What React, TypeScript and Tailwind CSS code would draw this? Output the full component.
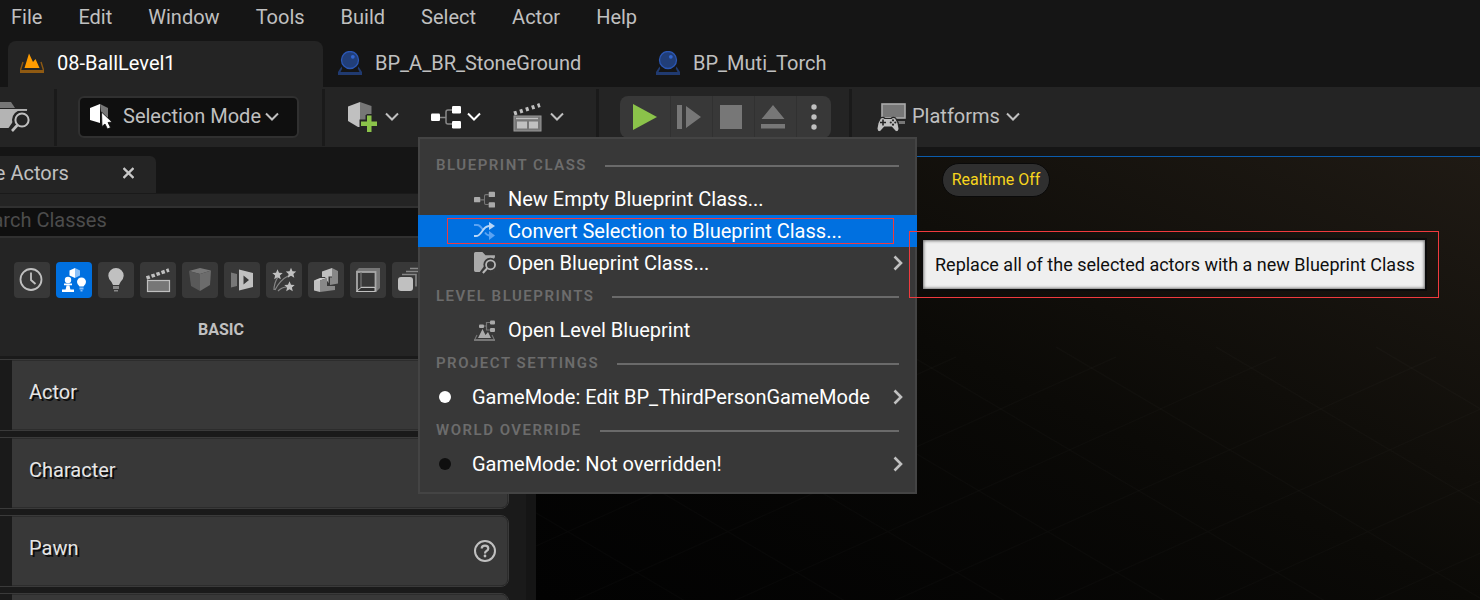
import type { ReactNode } from "react";

const menus = ["File", "Edit", "Window", "Tools", "Build", "Select", "Actor", "Help"];

function Chevron({ className = "text-[#c0c0c0]" }: { className?: string }) {
  return (
    <svg width="14" height="10" viewBox="0 0 14 10" className={className} fill="none" stroke="currentColor" strokeWidth="2">
      <path d="M1 1.5 L7 7.5 L13 1.5" />
    </svg>
  );
}

function SubmenuArrow() {
  return (
    <svg width="10" height="16" viewBox="0 0 10 16" fill="none" stroke="#c0c0c0" strokeWidth="2.6">
      <path d="M1.5 1.5 L8 8 L1.5 14.5" />
    </svg>
  );
}

function LevelIcon() {
  return (
    <svg width="24" height="20" viewBox="0 0 24 20">
      <path d="M0 17h24v3H0z" fill="#8f5a12" />
      <path d="M3 9 L0.5 17 M21 9 L23.5 17" stroke="#8f5a12" strokeWidth="1.4" />
      <path d="M4.5 15 L9 0.5 L13 9 L15.5 6 L19.5 15z" fill="#ff9c00" />
    </svg>
  );
}

function OrbIcon() {
  return (
    <svg width="24" height="24" viewBox="0 0 24 24">
      <path d="M3.500 15.500 L0 21v3h24v-3L20.500 15.500 L19.800 17.500 L21.500 21h-19l1.700-3.500z" fill="#203a70" />
      <circle cx="12" cy="9" r="8.500" fill="#213e78" stroke="#2b57b4" strokeWidth="1.300" />
      <circle cx="14.800" cy="5.800" r="1.900" fill="#3266cf" />
    </svg>
  );
}

function FolderSearch({ size, bg }: { size: number; bg: string }) {
  return (
    <svg width={size} height={size} viewBox="0 0 21 21" className="shrink-0">
      <path d="M0 1.500 Q0 0 1.500 0 H8 L11 3 H20 V17.500 Q20 19 18.500 19 H1.500 Q0 19 0 17.500z" fill="#aaaaaa" />
      <path d="M20 5 V19 H9 Z" fill={bg} />
      <circle cx="15.500" cy="12" r="6.500" fill={bg} />
      <path d="M12.500 14 L7.500 20.500" stroke={bg} strokeWidth="5" />
      <circle cx="15.800" cy="12.200" r="4.300" fill="none" stroke="#b8b8b8" strokeWidth="1.700" />
      <path d="M12.700 15.400 L8.500 20" stroke="#b8b8b8" strokeWidth="2" />
    </svg>
  );
}

function BrowseIcon() {
  return (
    <svg width="42" height="32" viewBox="0 0 42 32" className="shrink-0">
      <path d="M12 1 H23 L27 7 H12z" fill="#777" />
      <path d="M0 8 H39 Q40 8 40 10 L24 27 H2 Q0 27 0 25z" fill="#b4b4b4" />
      <circle cx="34" cy="19" r="10" fill="#242424" />
      <path d="M34 10 L40 8 V14z" fill="#242424" />
      <path d="M29 21 L22 31" stroke="#242424" strokeWidth="7" />
      <path d="M26 9 H39" stroke="#b4b4b4" strokeWidth="1.800" />
      <circle cx="34" cy="19" r="6.600" fill="none" stroke="#c0c0c0" strokeWidth="2" />
      <path d="M29.500 24 L24 30" stroke="#c0c0c0" strokeWidth="2.600" />
    </svg>
  );
}

function SelectIcon() {
  return (
    <svg width="23" height="26" viewBox="0 0 23 26">
      <path d="M0 4 L10 0 V19 L0 16z" fill="#fff" />
      <path d="M10 0 L18 4 V14 L11 8z" fill="#777" />
      <path d="M11.500 8 L12 22.500 L15 20 L17.500 25 L20.500 23.500 L18 18.500 L22 18z" fill="#fff" stroke="#0f0f0f" strokeWidth="0.800" />
    </svg>
  );
}

function AddCubeIcon() {
  return (
    <svg width="30" height="30" viewBox="0 0 30 30">
      <path d="M1 4.500 L13 0 V25 L11 25 L1 19z" fill="#c0c0c0" />
      <path d="M13 0 L24.500 4 V13 H18.500 V18 H13z" fill="#777" />
      <path d="M19.500 12 H26 V18.500 H30 V25.500 H12.500 V17.500 H19.500z" fill="#242424" />
      <path d="M20 13.500 H24.500 V19.500 H30 V24 H24.500 V30 H20 V24 H14 V19.500 H20z" fill="#8bc34a" />
    </svg>
  );
}

function GraphIcon({ width, color, wire }: { width: number; color: string; wire: string }) {
  return (
    <svg width={width} height={Math.round(width * 0.8)} viewBox="0 0 30 24">
      <path d="M9 12.500 H15 M21 5 H17 Q15 5 15 7 V17 Q15 19 17 19 H21" fill="none" stroke={wire} strokeWidth="1.500" />
      <rect x="0" y="8.500" width="9" height="7.500" rx="1.200" fill={color} />
      <rect x="21" y="1" width="9" height="7.500" rx="1.200" fill={color} />
      <rect x="21" y="16" width="9" height="7.500" rx="1.200" fill={color} />
    </svg>
  );
}

function CinematicsIcon() {
  return (
    <svg width="29" height="30" viewBox="0 0 29 30">
      <path d="M1 11.500 L27 3" stroke="#c0c0c0" strokeWidth="4" strokeDasharray="3 3.200" />
      <rect x="1" y="14" width="27" height="15" fill="#777" stroke="#999" />
      <path d="M3 16.500h22" stroke="#c0c0c0" strokeWidth="1.400" />
      <path d="M4 19.500h10v7H4zM16 19.500h9v7h-9z" fill="#c0c0c0" />
    </svg>
  );
}

function PlatformsIcon() {
  return (
    <svg width="30" height="29" viewBox="0 0 30 29">
      <rect x="6" y="1" width="23" height="14" fill="#777" stroke="#aaa" strokeWidth="1.600" />
      <path d="M22 18 h7 v3 h-6z" fill="#777" />
      <path d="M4.500 15 Q7 13.500 9 15.500 H15 Q17 13.500 19.500 15 Q23.500 21 23 26.500 Q22 30 19 28 L15.500 24 H8.500 L5 28 Q2 30 1 26.500 Q0.500 21 4.500 15z" fill="#c0c0c0" stroke="#242424" strokeWidth="1.200" />
      <path d="M7 16.500v6M4 19.500h6" stroke="#242424" strokeWidth="1.600" />
      <circle cx="17" cy="17.300" r="1.100" fill="#242424" />
      <circle cx="17" cy="21.700" r="1.100" fill="#242424" />
      <circle cx="19.300" cy="19.500" r="1.100" fill="#242424" />
      <circle cx="14.800" cy="19.500" r="1.100" fill="#242424" />
    </svg>
  );
}

function ShuffleIcon() {
  return (
    <svg width="21" height="18" viewBox="0 0 21 18" fill="none" strokeWidth="1.800">
      <path d="M0 3 H3 Q6 3 9 8 M11 10.500 Q12.500 13 15 13.500" stroke="#5ba3f2" />
      <path d="M15 9 L21 13.500 L15 18z" fill="#5ba3f2" />
      <path d="M0 14 H2 C8 14 8 4.500 15 4" stroke="#b9d7f8" />
      <path d="M15 0 L21 4 L15 8z" fill="#b9d7f8" />
    </svg>
  );
}

function LevelGraphIcon() {
  return (
    <svg width="21" height="21" viewBox="0 0 21 21">
      <path d="M9 6 H12.500 M16 2.500 H12.500 V10 H16" fill="none" stroke="#777" strokeWidth="1.200" />
      <rect x="5" y="4.500" width="5" height="3.500" rx="1" fill="#aaa" />
      <rect x="16" y="0.500" width="5" height="4" rx="1" fill="#aaa" />
      <rect x="16" y="8" width="5" height="4" rx="1" fill="#aaa" />
      <path d="M4 18 L8.500 9 L11.500 15 L14 12 L17 18z" fill="#aaa" />
      <path d="M0 19h21v2H0z" fill="#777" />
      <path d="M3 15 L1 19 M18 15 L20 19" stroke="#777" strokeWidth="1.100" />
    </svg>
  );
}

const star = "M0 -5.200 L1.500 -1.700 L5.200 -1.500 L2.400 1 L3.300 4.700 L0 2.700 L-3.300 4.700 L-2.400 1 L-5.200 -1.500 L-1.500 -1.700z";

const categories: { name: string; icon: ReactNode }[] = [
  {
    name: "Recently Placed",
    icon: (
      <>
        <circle cx="17" cy="17.500" r="10.500" fill="none" stroke="#c0c0c0" strokeWidth="1.800" />
        <path d="M17 10.500 V18 L21.500 22" fill="none" stroke="#c0c0c0" strokeWidth="1.800" />
      </>
    ),
  },
  {
    name: "Basic",
    icon: (
      <>
        <path d="M13.500 8.500 L19 6 V16 L13.500 13.500z" fill="#fff" />
        <path d="M19 6 L24 8.500 V13.500 L19 16z" fill="#8cc0f7" />
        <circle cx="12" cy="18" r="3.200" fill="#fff" />
        <path d="M8 21.500h8v1.800H8z M10.500 23.500h3l1 4.500h-5z M6 27.500h12v2.500H6z" fill="#fff" />
        <path d="M25.500 15.500 a4.500 4.500 0 0 1 4.500 4.500 q0 2-2.500 4.500h-4 q-2.500-2.500-2.500-4.500 a4.500 4.500 0 0 1 4.500-4.500z" fill="#fff" />
        <path d="M23.500 25.500h4v2h-4z M24.500 28h2v1.500h-2z" fill="#8cc0f7" />
      </>
    ),
  },
  {
    name: "Lights",
    icon: (
      <>
        <path d="M18 6 a7.700 7.700 0 0 1 7.700 7.700 q0 3-3.200 6.300 l-1.500 3h-6 l-1.500-3 q-3.200-3.300-3.200-6.300 A7.700 7.700 0 0 1 18 6z" fill="#c0c0c0" />
        <path d="M15 24h6v3h-6z M16 28h4v1.500h-4z" fill="#888" />
      </>
    ),
  },
  {
    name: "Cinematic",
    icon: (
      <>
        <path d="M6.500 16 L29 8" stroke="#c0c0c0" strokeWidth="3.500" strokeDasharray="3.500 1.800" />
        <rect x="7.500" y="18.500" width="22" height="11" fill="#777" stroke="#c0c0c0" strokeWidth="1.200" />
      </>
    ),
  },
  {
    name: "Visual Effects",
    icon: (
      <>
        <path d="M7 9 L18 6 L29 8.500 L18 12z" fill="#777" />
        <path d="M7 9 L18 12 V29 L9 24z" fill="#595959" />
        <path d="M18 12 L29 8.500 L28 23 L18 29z" fill="#6c6c6c" />
      </>
    ),
  },
  {
    name: "Geometry",
    icon: (
      <>
        <path d="M7 10.500 L13 12 V24 L7 25.500z" fill="#777" />
        <path d="M15 7.500 L29 11 V25 L15 28.500z M19.500 13.500 V22.500 L25 18z" fill="#c0c0c0" fillRule="evenodd" />
      </>
    ),
  },
  {
    name: "Particles",
    icon: (
      <>
        <path d="M8 28 Q8 21 12 15 M9 28 Q14 18 22 14 M12 29 Q16 25 21 25" stroke="#888" strokeWidth="1.200" fill="none" />
        <path d={star} fill="#c0c0c0" transform="translate(11.500 12.500)" />
        <path d={star} fill="#c0c0c0" transform="translate(25 11)" />
        <path d={star} fill="#c0c0c0" transform="translate(23.500 24.500)" />
      </>
    ),
  },
  {
    name: "Volumes",
    icon: (
      <>
        <path d="M14 9.500 L24 6 V14.500 H20.500 V21 L17 15 H14z" fill="#c0c0c0" />
        <path d="M24 6 L30 9 V21.500 L22 23 V15.500 H24z" fill="#888" />
        <path d="M6 18.500 L12 17 V30 L6 28.500z" fill="#c0c0c0" />
        <path d="M6 18.500 L12 16 H19 L12 18.500z" fill="#d0d0d0" />
        <path d="M12 18.500 L19 16 V24 H27 V28 L12 30z" fill="#888" />
      </>
    ),
  },
  {
    name: "Brushes",
    icon: (
      <>
        <path d="M6 9 L9 6 H30 V26 L26 30 V10 H6z" fill="#777" />
        <rect x="7" y="10" width="18.500" height="19" fill="none" stroke="#a8a8a8" strokeWidth="1.800" />
        <path d="M11 10 V25 H25" stroke="#777" strokeWidth="1.200" fill="none" />
        <path d="M6.500 29.500 L11 25.500 H25 V29.500z" fill="#303030" stroke="#c0c0c0" />
      </>
    ),
  },
  {
    name: "All Classes",
    icon: (
      <>
        <path d="M18 6.500h12v12 M14 9.500h13v12 M10 12.500h14v12" stroke="#888" strokeWidth="1.600" fill="none" />
        <rect x="6" y="15" width="15" height="14" rx="3" fill="#c0c0c0" />
      </>
    ),
  },
];

const actors = ["Actor", "Character", "Pawn"];

function Divider() {
  return <div className="h-[57px] w-[3px] shrink-0 bg-[#1a1a1a]" />;
}

function SectionTitle({ children }: { children: string }) {
  return (
    <div className="flex h-[35px] items-center gap-[18px] px-4">
      <h3 className="whitespace-nowrap text-[15px] font-semibold tracking-[1.500px] text-[#6c6c6c]">{children}</h3>
      <div className="h-0.5 flex-1 bg-[#6a6a6a]" />
    </div>
  );
}

function MenuItem({ icon, label, arrow }: { icon: ReactNode; label: string; arrow?: boolean }) {
  return (
    <button className="flex h-8 w-full items-center pl-[54px] pr-3 text-left">
      <span className="flex w-[34px] shrink-0 items-center">{icon}</span>
      <span className="flex-1 whitespace-nowrap">{label}</span>
      {arrow && <SubmenuArrow />}
    </button>
  );
}

function ModeItem({ label, dot }: { label: string; dot: ReactNode }) {
  return (
    <button className="flex h-8 w-full items-center pl-[19px] pr-3 text-left">
      <span className="w-[33px] shrink-0">{dot}</span>
      <span className="flex-1 whitespace-nowrap">{label}</span>
      <SubmenuArrow />
    </button>
  );
}

function BlueprintMenu() {
  return (
    <div className="absolute -left-[13px] top-[50px] z-10 w-[499px] border-2 border-[#444444] bg-[#383838] pb-3 pt-[9px] text-xl text-white">
      <SectionTitle>BLUEPRINT CLASS</SectionTitle>
      <MenuItem icon={<GraphIcon width={21} color="#aaaaaa" wire="#777777" />} label="New Empty Blueprint Class..." />
      <div className="relative -mx-0.5 bg-[#0070e0] px-0.5">
        <MenuItem icon={<ShuffleIcon />} label="Convert Selection to Blueprint Class..." />
        <div className="pointer-events-none absolute inset-y-[3px] left-[29px] right-[23px] border border-[#f03a3e]" />
        <div className="absolute left-[491px] top-4 border border-[#f03a3e] px-[11px] py-1.5">
          <div
            role="tooltip"
            className="flex h-[53px] items-center whitespace-nowrap border-2 border-[#0c0c0c] bg-[#efefef] pl-3 pr-2.5 text-lg text-[#0f0f0f] shadow-[inset_0_0_3px_1px_#777]"
          >
            Replace all of the selected actors with a new Blueprint Class
          </div>
        </div>
      </div>
      <MenuItem icon={<FolderSearch size={22} bg="#383838" />} label="Open Blueprint Class..." arrow />
      <SectionTitle>LEVEL BLUEPRINTS</SectionTitle>
      <MenuItem icon={<LevelGraphIcon />} label="Open Level Blueprint" />
      <SectionTitle>PROJECT SETTINGS</SectionTitle>
      <ModeItem label="GameMode: Edit BP_ThirdPersonGameMode" dot={<span className="block size-3 rounded-full bg-white" />} />
      <SectionTitle>WORLD OVERRIDE</SectionTitle>
      <ModeItem label="GameMode: Not overridden!" dot={<span className="block size-3 rounded-full bg-[#0f0f0f]" />} />
    </div>
  );
}

function Toolbar() {
  return (
    <div className="flex h-[60px] shrink-0 items-center bg-[#242424] text-xl text-[#c0c0c0]">
      <button aria-label="Browse" className="-ml-3 mr-6 flex">
        <BrowseIcon />
      </button>
      <Divider />
      <button className="ml-[21px] mr-[23px] flex h-[42px] w-[221px] shrink-0 items-center rounded-md border-2 border-[#303030] bg-[#0f0f0f] pl-2.5">
        <SelectIcon />
        <span className="ml-2.5 mr-1 whitespace-nowrap pb-0.5">Selection Mode</span>
        <Chevron />
      </button>
      <Divider />
      <button aria-label="Add" className="ml-[22px] flex items-center gap-2">
        <AddCubeIcon />
        <Chevron />
      </button>
      <div className="relative ml-8 flex h-full">
        <button aria-label="Blueprints" className="flex items-center gap-1.5">
          <GraphIcon width={30} color="#ffffff" wire="#888888" />
          <Chevron className="text-white" />
        </button>
        <BlueprintMenu />
      </div>
      <button aria-label="Cinematics" className="ml-8 mr-8 flex items-center gap-2">
        <CinematicsIcon />
        <Chevron />
      </button>
      <Divider />
      <div className="ml-[21px] mr-[18px] flex h-[42px] shrink-0 divide-x divide-[#313131] overflow-hidden rounded-lg bg-[#383838]">
        <button aria-label="Play" className="flex w-[51px] items-center justify-center">
          <svg width="24" height="26" viewBox="0 0 24 26">
            <path d="M0 0 L24 13 L0 26z" fill="#8bc34a" />
          </svg>
        </button>
        <button aria-label="Skip" className="flex w-[42px] items-center justify-center pr-1.5">
          <svg width="24" height="24" viewBox="0 0 24 24" fill="#777">
            <path d="M0 0h5v24H0zM9 1 L24 12 L9 23z" />
          </svg>
        </button>
        <button aria-label="Stop" className="flex w-[42px] items-center justify-center pr-1.5">
          <span className="block h-6 w-[22px] bg-[#777777]" />
        </button>
        <button aria-label="Eject" className="flex w-[42px] items-center justify-center pr-1.5">
          <svg width="24" height="24" viewBox="0 0 24 24" fill="#777">
            <path d="M12 0 L23.500 14 H0.500z M0 19h24v4.500H0z" />
          </svg>
        </button>
        <button aria-label="Play options" className="flex w-[34px] items-center justify-center">
          <svg width="6" height="28" viewBox="0 0 6 28" fill="#c0c0c0">
            <circle cx="3" cy="4" r="2.700" />
            <circle cx="3" cy="14" r="2.700" />
            <circle cx="3" cy="24" r="2.700" />
          </svg>
        </button>
      </div>
      <Divider />
      <button className="ml-6 flex items-center">
        <PlatformsIcon />
        <span className="ml-1.5 mr-1.5 pb-0.5">Platforms</span>
        <Chevron />
      </button>
    </div>
  );
}

function PlaceActors() {
  return (
    <aside className="-ml-[84px] flex w-[610px] shrink-0 flex-col bg-[#1a1a1a] text-xl text-[#c0c0c0]">
      <div className="bg-[#151515] pt-[9px]">
        <div className="flex h-[37px] w-60 items-center justify-between rounded-t-md bg-[#242424] pb-[3px] pl-10 pr-[22px]">
          <span className="whitespace-nowrap">Place Actors</span>
          <button aria-label="Close" className="flex">
            <svg width="11" height="12" viewBox="0 0 11 12" stroke="#c8c8c8" strokeWidth="2.400">
              <path d="M0.500 1 L10.500 11 M10.500 1 L0.500 11" />
            </svg>
          </button>
        </div>
      </div>
      <div className="border-t border-[#1a1a1a] bg-[#242424] pt-3">
        <input
          type="search"
          aria-label="Search Classes"
          placeholder="Search Classes"
          className="block h-8 w-full border-y-2 border-[#303030] bg-[#0f0f0f] pb-1 pl-[54px] placeholder:text-[#4c4c4c]"
        />
        <div className="mt-6 flex justify-center gap-1.5">
          {categories.map((c) => (
            <button key={c.name} aria-label={c.name} className={`size-9 rounded ${c.name === "Basic" ? "bg-[#0070e0]" : "bg-[#383838]"}`}>
              <svg width="36" height="36" viewBox="0 0 36 36">
                {c.icon}
              </svg>
            </button>
          ))}
        </div>
        <h2 className="pb-3.5 pt-5 text-center text-base font-bold">BASIC</h2>
      </div>
      <ul className="flex flex-col gap-1.5 pl-2 pr-[17px] pt-[3px]">
        {actors.map((name) => (
          <li key={name} className="flex h-[72px] shrink-0 items-stretch overflow-hidden rounded-lg border border-[#3a3a3a] bg-[#1a1a1a]">
            <div className="w-[87px] shrink-0" />
            <div className="flex flex-1 items-center justify-between rounded-r-md border-y border-r border-[#2c2c2c] bg-[#383838] pb-1.5 pl-[17px] pr-2.5">
              <span className="text-[#e6e6e6] [text-shadow:2px_2px_0_#0c0c0c]">{name}</span>
              <button aria-label={`About ${name}`} className="mt-1.5 flex">
                <svg width="24" height="24" viewBox="0 0 24 24" fill="none" stroke="#c0c0c0">
                  <circle cx="12" cy="12" r="10" strokeWidth="2" />
                  <path d="M8.700 9.600 Q8.700 6.700 12 6.700 Q15.300 6.700 15.300 9.500 Q15.300 11 13.500 12 Q12 12.800 12 14.400" strokeWidth="2.200" />
                  <circle cx="12" cy="17" r="1.400" fill="#c0c0c0" stroke="none" />
                </svg>
              </button>
            </div>
          </li>
        ))}
        <li className="flex h-[72px] shrink-0 items-stretch overflow-hidden rounded-lg border border-[#3a3a3a] bg-[#1a1a1a]">
          <div className="w-[87px] shrink-0" />
          <div className="flex-1 rounded-r-md border-y border-r border-[#2c2c2c] bg-[#383838]" />
        </li>
      </ul>
    </aside>
  );
}

const gridOrigins = [-600, -440, -280, -120, 40, 200, 360, 520, 680, 840];

function Viewport() {
  return (
    <main className="relative ml-2.5 mt-[9px] flex-1 overflow-hidden border-t border-[#0b5cad] bg-linear-to-tr from-[#020202] via-[#0b0a07] to-[#1f1a14]">
      <svg className="absolute inset-0 size-full" viewBox="0 0 944 444" preserveAspectRatio="xMinYMin slice" fill="none">
        {gridOrigins.map((x) => (
          <path key={x} d={`M${x} 190 L${x + 760} 640 M${x + 700} 200 L${x - 100} 560`} stroke="#ffffff" strokeOpacity="0.018" strokeWidth="1.500" />
        ))}
      </svg>
      <button className="relative ml-[406px] mt-1.5 h-[34px] w-[108px] rounded-full border border-[#0a0a0a] bg-[#2f2f2f] text-base text-[#f7d51d]">
        Realtime Off
      </button>
    </main>
  );
}

export default function App() {
  return (
    <div className="flex h-screen flex-col overflow-hidden bg-[#151515] font-['Roboto',sans-serif] text-[#c0c0c0]">
      <nav className="flex h-[41px] shrink-0 gap-9 pl-[11px] pt-[3px] text-xl">
        {menus.map((m) => (
          <button key={m} className="h-7">
            {m}
          </button>
        ))}
      </nav>
      <div className="flex h-[46px] shrink-0 gap-[3px] pl-2 text-xl">
        <button className="flex w-[315px] items-center gap-[13px] rounded-t-lg bg-[#242424] pb-0.5 pl-3 text-white">
          <LevelIcon />
          08-BallLevel1
        </button>
        <button className="flex w-[315px] items-center gap-[13px] pb-0.5 pl-3">
          <OrbIcon />
          BP_A_BR_StoneGround
        </button>
        <button className="flex w-[315px] items-center gap-[13px] pb-0.5 pl-3">
          <OrbIcon />
          BP_Muti_Torch
        </button>
      </div>
      <Toolbar />
      <div className="flex min-h-0 flex-1">
        <PlaceActors />
        <Viewport />
      </div>
    </div>
  );
}
